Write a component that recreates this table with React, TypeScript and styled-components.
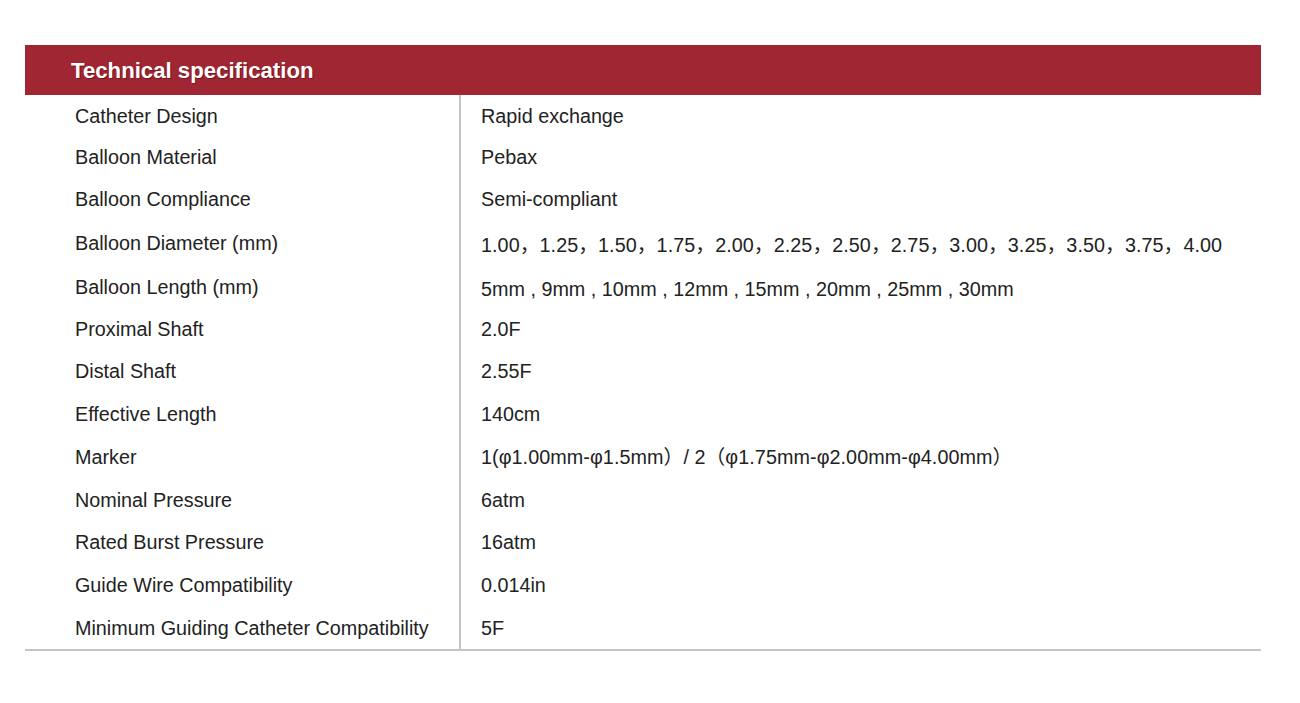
import * as React from 'react';
import styled, { createGlobalStyle } from 'styled-components';

const GlobalStyle = createGlobalStyle`
    html, body {
        margin: 0;
        padding: 0;
        background: #ffffff;
    }
    body {
        font-family: 'Liberation Sans', Arial, 'Noto Sans CJK SC', sans-serif;
        color: #222222;
    }
`;

interface SpecRow {
    name: string;
    value: string;
    height: number;
    cjk?: boolean;
    nudge?: number;
}

const rows: SpecRow[] = [
    { name: 'Catheter Design', value: 'Rapid exchange', height: 41 },
    { name: 'Balloon Material', value: 'Pebax', height: 41 },
    { name: 'Balloon Compliance', value: 'Semi-compliant', height: 43 },
    {
        name: 'Balloon Diameter (mm)',
        value: '1.00，1.25，1.50，1.75，2.00，2.25，2.50，2.75，3.00，3.25，3.50，3.75，4.00',
        height: 45,
        cjk: true,
        nudge: 2,
    },
    {
        name: 'Balloon Length (mm)',
        value: '5mm , 9mm , 10mm , 12mm , 15mm , 20mm , 25mm , 30mm',
        height: 43,
        nudge: 2,
    },
    { name: 'Proximal Shaft', value: '2.0F', height: 42 },
    { name: 'Distal Shaft', value: '2.55F', height: 42 },
    { name: 'Effective Length', value: '140cm', height: 43 },
    { name: 'Marker', value: '1(φ1.00mm-φ1.5mm）/ 2（φ1.75mm-φ2.00mm-φ4.00mm）', height: 43, cjk: true },
    { name: 'Nominal Pressure', value: '6atm', height: 43 },
    { name: 'Rated Burst Pressure', value: '16atm', height: 42 },
    { name: 'Guide Wire Compatibility', value: '0.014in', height: 43 },
    { name: 'Minimum Guiding Catheter Compatibility', value: '5F', height: 43 },
];

const Page = styled.div`
    padding: 45px 39px 0 25px;
`;

const Table = styled.div`
    width: 1236px;
    border-bottom: 2px solid #c4c4c4;
`;

const Header = styled.div`
    height: 50px;
    background: #a02634;
    display: flex;
    align-items: center;
    padding-left: 46px;
`;

const Title = styled.h2`
    margin: 0;
    padding-top: 2px;
    font-size: 22.2px;
    line-height: 26px;
    font-weight: bold;
    color: #ffffff;
    text-shadow: 1px 1px 1px rgba(60, 0, 0, 0.45);
`;

const Row = styled.div<{ $height: number }>`
    display: grid;
    grid-template-columns: 434px 1fr;
    height: ${(p) => p.$height}px;
`;

const NameCell = styled.div`
    display: flex;
    align-items: center;
    padding-left: 50px;
    font-size: 19.78px;
    line-height: 24px;
    color: #222222;
    white-space: nowrap;
`;

const ValueCell = styled.div<{ $cjk?: boolean; $nudge?: number }>`
    display: flex;
    align-items: center;
    border-left: 2px solid #c4c4c4;
    padding-left: 20px;
    padding-top: ${(p) => (p.$nudge || 0) * 2}px;
    font-size: 19.78px;
    line-height: 24px;
    color: #222222;
    white-space: nowrap;
    letter-spacing: ${(p) => (p.$cjk ? '0.06px' : 'normal')};
    font-family: ${(p) =>
        p.$cjk
            ? "'Liberation Sans', 'Noto Sans CJK SC', sans-serif"
            : "'Liberation Sans', Arial, sans-serif"};
`;

export default function App() {
    return (
        <Page>
            <GlobalStyle />
            <Table>
                <Header>
                    <Title>Technical specification</Title>
                </Header>
                {rows.map((row, i) => (
                    <Row key={i} $height={row.height}>
                        <NameCell>{row.name}</NameCell>
                        <ValueCell $cjk={row.cjk} $nudge={row.nudge}>
                            {row.value}
                        </ValueCell>
                    </Row>
                ))}
            </Table>
        </Page>
    );
}
